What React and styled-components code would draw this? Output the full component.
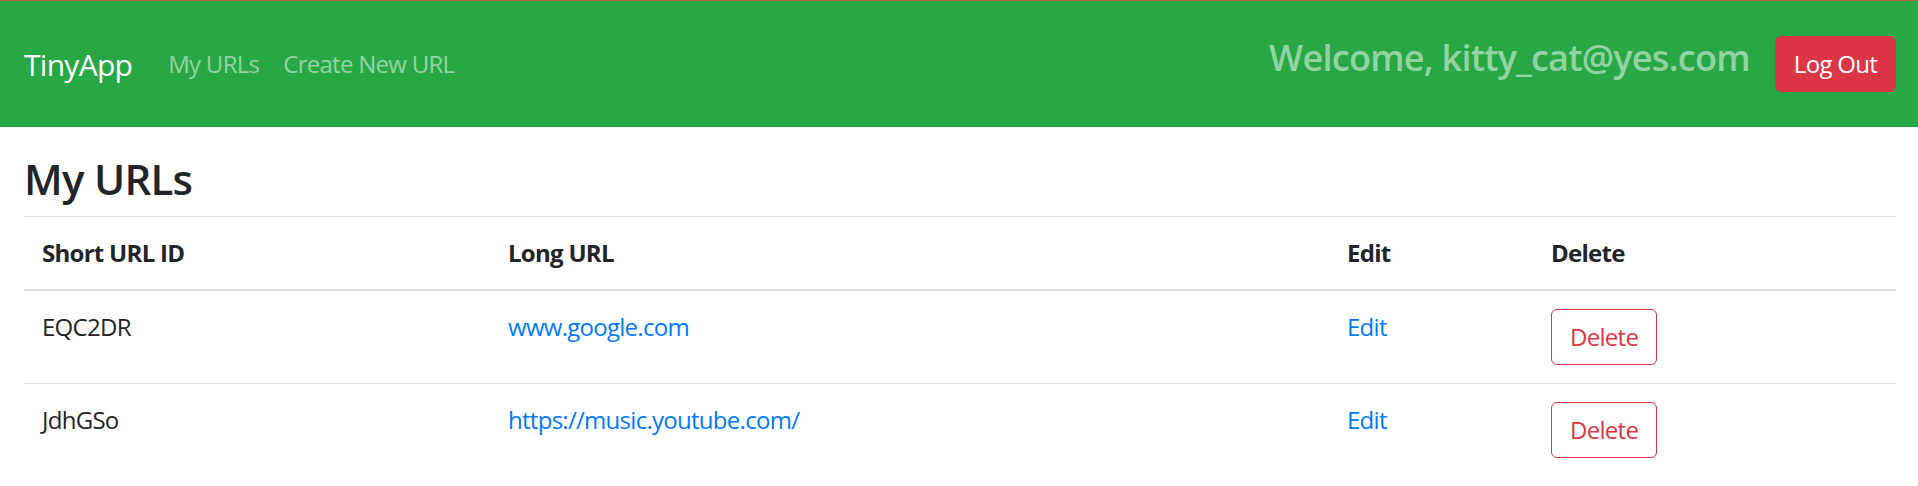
import React from 'react';
import styled, { createGlobalStyle } from 'styled-components';

const GlobalStyle = createGlobalStyle`
	body {
		margin: 0;
		font-family: "Open Sans", "Noto Sans", sans-serif;
		font-size: 24px;
		line-height: 1.5;
		letter-spacing: -0.03em;
		color: #212529;
		background: #fff;
	}
`;

const Navbar = styled.nav`
	display: flex;
	align-items: center;
	height: 126px;
	padding: 0 22px 0 24px;
	background: #28a745;
	border-top: 1px solid #b5564a;
`;

const Brand = styled.a`
	font-size: 30px;
	color: #fff;
	margin-right: 24px;
	text-decoration: none;
	white-space: nowrap;
`;

const NavLink = styled.a`
	padding: 0 12px;
	color: rgba(255, 255, 255, 0.5);
	text-decoration: none;
	white-space: nowrap;
`;

const NavRight = styled.div`
	display: flex;
	align-items: center;
	margin-left: auto;
	gap: 25px;
`;

const Welcome = styled.h4`
	margin: 0 0 12px;
	font-size: 36px;
	font-weight: 600;
	line-height: 1.2;
	color: rgba(255, 255, 255, 0.5);
`;

const Button = styled.button`
	font-family: inherit;
	font-size: 24px;
	letter-spacing: inherit;
	line-height: 1.5;
	padding: 9px 18px;
	border-radius: 6px;
	border: 1px solid #dc3545;
	background: ${p => (p.outline ? 'transparent' : '#dc3545')};
	color: ${p => (p.outline ? '#dc3545' : '#fff')};
	cursor: pointer;
`;

const Main = styled.main`
	padding: 27px 22px 0 24px;
`;

const Title = styled.h3`
	margin: 0 0 12px;
	font-size: 42px;
	font-weight: 600;
	line-height: 1.2;
`;

const Table = styled.table`
	width: 100%;
	border-collapse: collapse;
`;

const Th = styled.th`
	text-align: left;
	vertical-align: bottom;
	padding: 18px;
	font-weight: 700;
	border-top: 1px solid #dee2e6;
	border-bottom: 2px solid #dee2e6;
	width: ${p => p.w || 'auto'};
`;

const Td = styled.td`
	vertical-align: top;
	padding: 18px;
	border-top: 1px solid #dee2e6;
`;

const Link = styled.a`
	color: #007bff;
	text-decoration: none;
`;

const urls = [
	{ id: 'EQC2DR', long: 'www.google.com' },
	{ id: 'JdhGSo', long: 'https://music.youtube.com/' },
];

export default function App() {
	return (
		<>
			<GlobalStyle />
			<Navbar>
				<Brand href="#">TinyApp</Brand>
				<NavLink href="#">My URLs</NavLink>
				<NavLink href="#">Create New URL</NavLink>
				<NavRight>
					<Welcome>Welcome, kitty_cat@yes.com</Welcome>
					<Button>Log Out</Button>
				</NavRight>
			</Navbar>
			<Main>
				<Title>My URLs</Title>
				<Table>
					<thead>
						<tr>
							<Th w="430px">Short URL ID</Th>
							<Th w="803px">Long URL</Th>
							<Th w="168px">Edit</Th>
							<Th>Delete</Th>
						</tr>
					</thead>
					<tbody>
						{urls.map(url => (
							<tr key={url.id}>
								<Td>{url.id}</Td>
								<Td><Link href="#">{url.long}</Link></Td>
								<Td><Link href="#">Edit</Link></Td>
								<Td><Button outline>Delete</Button></Td>
							</tr>
						))}
					</tbody>
				</Table>
			</Main>
		</>
	);
}
